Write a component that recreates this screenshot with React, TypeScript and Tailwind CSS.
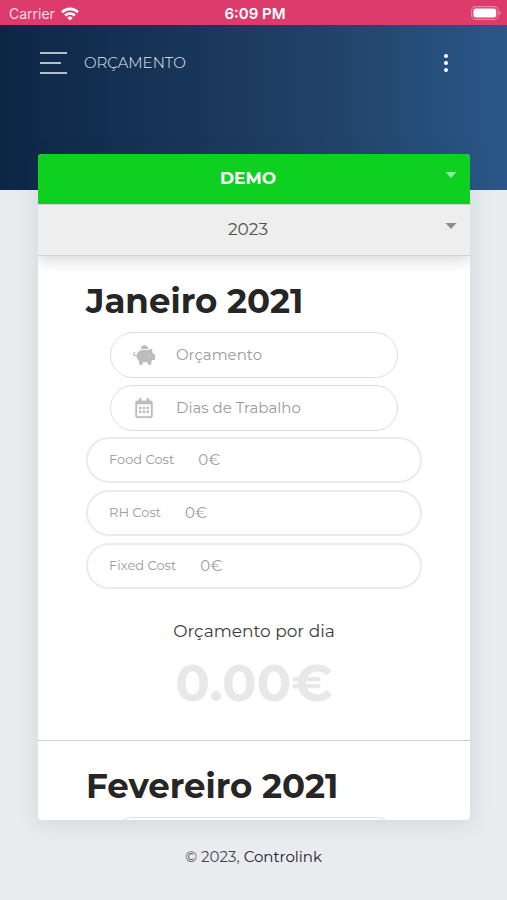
import React from "react";
import { FaPiggyBank, FaRegCalendarAlt } from "react-icons/fa";

const months = [
  { id: "jan", name: "Janeiro 2021" },
  { id: "fev", name: "Fevereiro 2021" },
];

const costs = [
  { id: "food", label: "Food Cost" },
  { id: "rh", label: "RH Cost" },
  { id: "fixed", label: "Fixed Cost" },
];

const StatusBar = () => {
  return (
    <div className="grid h-[25px] shrink-0 grid-cols-3 items-center bg-[#dd3b6b] pr-[6px] pl-[9px] font-[Inter,sans-serif] text-[15px] leading-5 text-white">
      <div className="flex items-center gap-[6px] pt-[2px]">
        <span className="text-[14px] text-[#fbdde6]">Carrier</span>
        <svg width="18" height="14" viewBox="0 0 18 14" fill="none" stroke="white" strokeWidth="2.6">
          <path d="M1 5.2a11.4 11.4 0 0 1 16 0" />
          <path d="M4.1 8.5a7 7 0 0 1 9.8 0" />
          <path d="M9 13.6 6.2 10.8a4 4 0 0 1 5.6 0z" fill="white" stroke="none" />
        </svg>
      </div>
      <span className="pt-[2px] text-center font-semibold">6:09 PM</span>
      <svg className="justify-self-end" width="30" height="14" viewBox="0 0 30 14">
        <rect x="0.6" y="0.6" width="26.5" height="12.8" rx="4" fill="none" stroke="#eb8aa8" strokeWidth="1.1" />
        <rect x="2.4" y="2.4" width="22.8" height="9.2" rx="2.4" fill="white" />
        <path d="M28.4 4.8v4.4q1.4-.8 1.4-2.2t-1.4-2.2z" fill="#eb8aa8" />
      </svg>
    </div>
  );
};

const Header = () => {
  return (
    <header className="h-[165px] shrink-0 bg-linear-to-r from-[#0c2646] via-[#204065] via-60% to-[#2a5788] px-10 pt-[26px]">
      <div className="flex h-6 items-center">
        <button aria-label="Menu" className="flex w-[27px] flex-col gap-2">
          <span className="h-[2px] w-full bg-[#b4bec9]" />
          <span className="h-[2px] w-[21px] bg-[#b4bec9]" />
          <span className="h-[2px] w-full bg-[#b4bec9]" />
        </button>
        <h1 className="ml-[17px] text-[15px] leading-6 font-light text-[#e4ecf3]">ORÇAMENTO</h1>
        <button aria-label="Mais opções" className="mr-[19px] ml-auto flex flex-col gap-[3px]">
          <span className="size-1 rounded-full bg-white" />
          <span className="size-1 rounded-full bg-white" />
          <span className="size-1 rounded-full bg-white" />
        </button>
      </div>
    </header>
  );
};

type PickerProps = {
  label: string;
  value: string;
  className: string;
  arrow: string;
};

const Picker = ({ label, value, className, arrow }: PickerProps) => {
  return (
    <div className={`relative ${className}`}>
      <select
        aria-label={label}
        defaultValue={value}
        className="h-[50px] w-full appearance-none pr-3 [text-align-last:center]"
      >
        <option>{value}</option>
      </select>
      <svg
        className={`pointer-events-none absolute top-[18px] right-[13px] ${arrow}`}
        width="12"
        height="6"
        viewBox="0 0 12 6"
        fill="currentColor"
      >
        <path d="M0.5 0h11L6 6z" />
      </svg>
    </div>
  );
};

type IconFieldProps = {
  id: string;
  label: string;
  icon: React.ReactNode;
};

const IconField = ({ id, label, icon }: IconFieldProps) => {
  return (
    <div className="flex h-[46px] items-center rounded-full border border-[#dedede] pl-[21px]">
      <label htmlFor={id} aria-label={label} className="flex w-6 justify-center text-[#bdbdbd]">
        {icon}
      </label>
      <input
        id={id}
        placeholder={label}
        className="ml-5 w-full min-w-0 flex-1 text-[15px] outline-none placeholder:text-[#9b9b9b]"
      />
    </div>
  );
};

const CostField = ({ id, label }: { id: string; label: string }) => {
  return (
    <div className="flex h-[46px] items-center rounded-full border-2 border-[#ebebeb] pl-[21px] text-[#9b9b9b]">
      <label htmlFor={id} className="text-[13px]">
        {label}
      </label>
      <input id={id} readOnly value="0€" className="ml-6 w-full min-w-0 flex-1 text-[15px] outline-none" />
    </div>
  );
};

const Month = ({ id, name }: { id: string; name: string }) => {
  return (
    <section className="border-b border-[#cfcfcf] px-12 pt-[25px]">
      <h2 className="text-[34px] leading-10 font-bold whitespace-nowrap text-[#262626]">{name}</h2>
      <div className="mx-6 mt-[11px] flex flex-col gap-[7px]">
        <IconField id={`${id}-budget`} label="Orçamento" icon={<FaPiggyBank size={22} />} />
        <IconField id={`${id}-days`} label="Dias de Trabalho" icon={<FaRegCalendarAlt size={20} />} />
      </div>
      <div className="mt-[6px] flex flex-col gap-[7px]">
        {costs.map((cost) => (
          <CostField key={cost.id} id={`${id}-${cost.id}`} label={cost.label} />
        ))}
      </div>
      <div className="pt-[30px] pb-[27px] text-center">
        <p className="text-[17px] leading-6 text-[#3c3c3c]">Orçamento por dia</p>
        <p className="mt-[10px] text-[51px] leading-[60px] font-bold text-[#e8e8e8]">0.00€</p>
      </div>
    </section>
  );
};

const App = () => {
  return (
    <div className="flex h-screen flex-col bg-[#e9ebef] font-['Montserrat','Inter',sans-serif]">
      <StatusBar />
      <Header />
      <main className="-mt-9 mr-[37px] ml-[38px] flex min-h-0 flex-1 flex-col overflow-hidden rounded-sm bg-white shadow-[0_4px_22px_rgba(60,80,80,0.13)]">
        <div className="z-10 shadow-[0_4px_14px_rgba(0,0,0,0.16)]">
          <Picker
            label="Restaurante"
            value="DEMO"
            className="bg-[#0dd020] text-[17px] font-bold text-white"
            arrow="text-[#8eea96]"
          />
          <Picker
            label="Ano"
            value="2023"
            className="border-y border-[#d2d2d2] bg-[#eeeeee] text-[17px] text-[#505050]"
            arrow="text-[#8c8c8c]"
          />
        </div>
        <div className="min-h-0 flex-1 overflow-y-auto [scrollbar-width:none]">
          {months.map((month) => (
            <Month key={month.id} {...month} />
          ))}
        </div>
      </main>
      <footer className="shrink-0 pt-[25px] pb-[31px] text-center text-[15px] leading-6 text-[#42454a]">
        © 2023,{" "}
        <a href="#" className="text-[#202226]">
          Controlink
        </a>
      </footer>
    </div>
  );
};

export default App;
